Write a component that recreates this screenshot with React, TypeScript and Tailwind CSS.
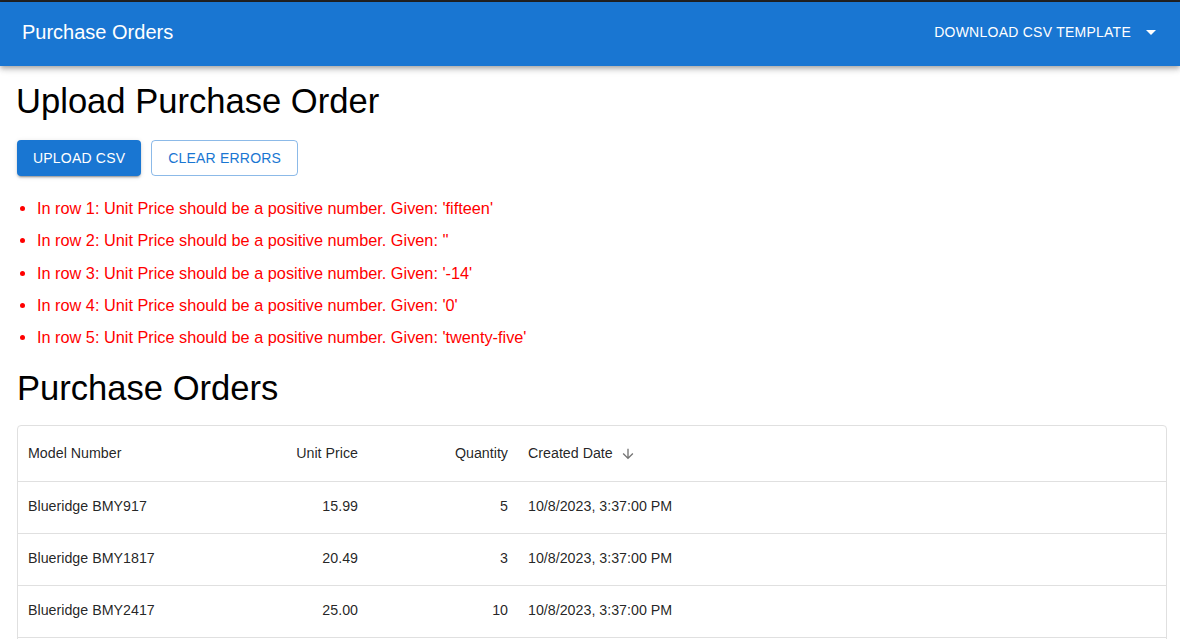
import React from "react";

const errors = [
  "In row 1: Unit Price should be a positive number. Given: 'fifteen'",
  "In row 2: Unit Price should be a positive number. Given: ''",
  "In row 3: Unit Price should be a positive number. Given: '-14'",
  "In row 4: Unit Price should be a positive number. Given: '0'",
  "In row 5: Unit Price should be a positive number. Given: 'twenty-five'",
];

const rows = [
  { model: "Blueridge BMY917", price: "15.99", qty: "5", date: "10/8/2023, 3:37:00 PM" },
  { model: "Blueridge BMY1817", price: "20.49", qty: "3", date: "10/8/2023, 3:37:00 PM" },
  { model: "Blueridge BMY2417", price: "25.00", qty: "10", date: "10/8/2023, 3:37:00 PM" },
  { model: "Blueridge BMY3017", price: "30.00", qty: "2", date: "10/8/2023, 3:37:00 PM" },
];

export default function App() {
  return (
    <div className="bg-white font-['Liberation_Sans',Arial,sans-serif] text-[rgba(0,0,0,0.87)] overflow-hidden h-[639px]">
      <div className="h-[2px] bg-[#222222]" />
      <header className="relative z-10 h-16 bg-[#1976d2] flex items-center justify-between pl-[22px] pr-[17px] shadow-[0_2px_4px_-1px_rgba(0,0,0,0.2),0_4px_5px_0_rgba(0,0,0,0.14),0_1px_10px_0_rgba(0,0,0,0.12)] text-white">
        <div className="text-[20px] leading-none -mt-[4px]">Purchase Orders</div>
        <div className="flex items-center -mt-[4px]">
          <span className="ml-[1px] text-[14px] tracking-[0.25px] uppercase">Download CSV Template</span>
          <svg className="ml-[8px]" width="24" height="24" viewBox="0 0 24 24" fill="white">
            <path d="M7 10l5 5 5-5z" />
          </svg>
        </div>
      </header>
      <main className="pl-[17px] pr-[13px]">
        <h1 className="mt-[14px] text-[34.6px] leading-[42px] text-black -ml-[1px]">Upload Purchase Order</h1>
        <div className="mt-[18px] flex gap-[10px]">
          <button className="h-9 px-4 rounded-[4px] bg-[#1976d2] text-white text-[14px] tracking-[0.2px] uppercase shadow-[0_3px_1px_-2px_rgba(0,0,0,0.2),0_2px_2px_0_rgba(0,0,0,0.14),0_1px_5px_0_rgba(0,0,0,0.12)]">
            Upload CSV
          </button>
          <button className="h-9 px-4 rounded-[4px] border border-[rgba(25,118,210,0.5)] text-[#1976d2] text-[14px] tracking-[0.2px] uppercase">
            Clear Errors
          </button>
        </div>
        <ul className="mt-[16px] list-disc pl-[20px] text-[16.3px] leading-[32.25px] text-[#ff0000]">
          {errors.map((e) => (
            <li key={e}>{e}</li>
          ))}
        </ul>
        <h2 className="mt-[14px] text-[34.6px] leading-[42px] text-black">Purchase Orders</h2>
        <div className="mt-[16px] border border-[#e0e0e0] rounded-[4px] text-[14.25px]">
          <div className="h-[56px] flex items-center border-b border-[#e0e0e0]">
            <div className="w-[200px] px-[10px]">Model Number</div>
            <div className="w-[150px] px-[10px] text-right">Unit Price</div>
            <div className="w-[150px] px-[10px] text-right">Quantity</div>
            <div className="flex-1 px-[10px] flex items-center">
              <span>Created Date</span>
              <svg className="ml-[7px] text-[#757575]" width="16" height="16" viewBox="0 0 24 24" fill="currentColor">
                <path d="M20 12l-1.41-1.41L13 16.17V4h-2v12.17l-5.58-5.59L4 12l8 8 8-8z" />
              </svg>
            </div>
          </div>
          {rows.map((r) => (
            <div key={r.model} className="h-[52px] flex items-center border-b border-[#e0e0e0]">
              <div className="w-[200px] px-[10px] -mt-[2px]">{r.model}</div>
              <div className="w-[150px] px-[10px] text-right -mt-[2px]">{r.price}</div>
              <div className="w-[150px] px-[10px] text-right -mt-[2px]">{r.qty}</div>
              <div className="flex-1 px-[10px] -mt-[2px]">{r.date}</div>
            </div>
          ))}
        </div>
      </main>
    </div>
  );
}
